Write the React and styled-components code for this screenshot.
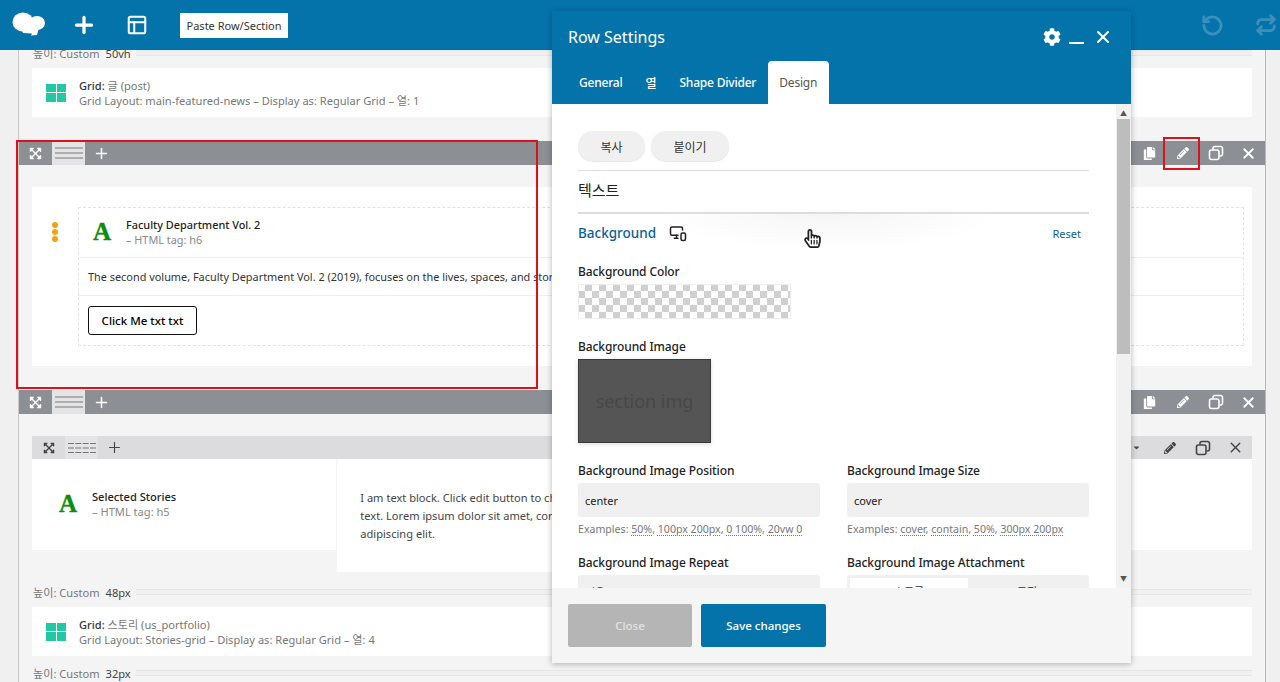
import React from "react";
import styled, { createGlobalStyle } from "styled-components";
import { Plus, PanelsTopLeft, RotateCcw, Repeat, X, MonitorSmartphone } from "lucide-react";
import {
  FaExpandArrowsAlt,
  FaPencilAlt,
  FaCopy,
  FaCog,
  FaCaretDown,
  FaRegHandPointer,
} from "react-icons/fa";

const GlobalStyle = createGlobalStyle`
  html, body {
    margin: 0;
    padding: 0;
    height: 100%;
    overflow: hidden;
    background: #f0f0f1;
    font-family: "Noto Sans", "Noto Sans CJK KR", sans-serif;
    font-size: 11.1px;
    color: #333;
  }
  * { box-sizing: border-box; }
`;

const Page = styled.div`
  position: relative;
  width: 1280px;
  height: 682px;
  overflow: hidden;
`;

const TopBar = styled.header`
  position: absolute;
  top: 0;
  left: 0;
  right: 0;
  height: 50px;
  z-index: 5;
  background: #0473aa;
  color: #fff;
  display: flex;
  align-items: center;
  padding: 0 0 0 12px;
`;

const BarIcon = styled.span`
  display: flex;
  align-items: center;
  justify-content: center;
  width: ${(p) => p.$w}px;
  color: ${(p) => (p.$dim ? "#3a90bd" : "#fff")};
`;

const PasteButton = styled.button`
  width: 108px;
  height: 25px;
  margin-left: 28px;
  margin-right: auto;
  border: 0;
  background: #fff;
  color: #333;
  font: inherit;
  font-size: 11px;
  padding: 0;
`;

const HistoryGroup = styled.div`
  display: flex;
  gap: 26px;
`;

const Canvas = styled.main`
  width: 1248px;
  height: 682px;
  margin-left: 18px;
  padding-top: 45px;
  background: #f4f4f4;
  border-left: 1px solid #c8c8c8;
  border-right: 1px solid #b8b8b8;
  overflow: hidden;
`;

const RowHead = styled.div`
  display: flex;
  justify-content: space-between;
  height: ${(p) => (p.$inner ? 23 : 24)}px;
  background: ${(p) => (p.$inner ? "#dcdcde" : "#8c8f94")};
  color: ${(p) => (p.$inner ? "#444" : "#fff")};
`;

const HeadGroup = styled.div`
  display: flex;
`;

const HeadButton = styled.span`
  display: flex;
  align-items: center;
  justify-content: center;
  width: 33px;
  height: 100%;
  background: ${(p) => (p.$active ? "#e4e4e6" : "transparent")};
`;

const Inset = styled.div`
  padding: ${(p) => p.$pad || "0 13px"};
`;

const Spacer = styled.div`
  display: flex;
  align-items: center;
  gap: 5px;
  height: 16px;
  margin-top: ${(p) => p.$top || 0}px;
  padding-left: 1px;
  color: #777;
  white-space: nowrap;
  b {
    font-weight: 400;
    color: #444;
    margin-left: 6px;
  }
`;

const SpacerLine = styled.i`
  flex: 1;
  height: 6px;
  background: #f0f0f0;
  border-top: 1px solid #e6e6e6;
  border-bottom: 1px solid #e6e6e6;
`;

const GridCard = styled.div`
  display: flex;
  align-items: center;
  gap: 13px;
  height: 49px;
  margin-top: 7px;
  padding-left: 14px;
  background: #fff;
  color: #777;
  line-height: 15px;
  b {
    color: #333;
    font-weight: 500;
  }
`;

const GridText = styled.div`
  padding-top: 1px;
`;

const GridIcon = styled.span`
  display: grid;
  grid-template-columns: 1fr 1fr;
  gap: 1px;
  width: 20px;
  height: 18px;
  i {
    background: #20c9a4;
  }
`;

const Row = styled.section`
  margin-top: ${(p) => p.$top}px;
`;

const WhiteBox = styled.div`
  display: flex;
  align-items: flex-start;
  gap: 20px;
  margin-top: 22px;
  padding: 20px 8px 20px 20px;
  background: #fff;
`;

const Dots = styled.span`
  display: flex;
  flex-direction: column;
  gap: 1px;
  margin-top: 15px;
  i {
    width: 6px;
    height: 6px;
    border-radius: 50%;
    background: #f5a014;
  }
`;

const ElementCard = styled.div`
  flex: 1;
  min-width: 0;
  border: 1px dashed #e2e2e2;
  font-size: 10.9px;
`;

const CardRow = styled.div`
  display: flex;
  align-items: center;
  height: ${(p) => p.$h}px;
  padding: 0 0 ${(p) => p.$bottom || 0}px ${(p) => p.$left}px;
  border-bottom: ${(p) => (p.$line ? "1px solid #eee" : "0")};
  white-space: nowrap;
  overflow: hidden;
`;

const LetterIcon = styled.span`
  width: 33px;
  flex: none;
  font-family: "Liberation Serif", serif;
  font-weight: 700;
  font-size: 25px;
  line-height: 28px;
  color: #0b8e0b;
  -webkit-text-stroke: 0.4px #0b8e0b;
`;

const HeadingText = styled.div`
  line-height: 15px;
  color: #888;
  b {
    display: block;
    font-weight: 500;
    color: #222;
  }
`;

const OutlineButton = styled.span`
  display: flex;
  align-items: center;
  justify-content: center;
  width: 109px;
  height: 29px;
  border: 1px solid #111;
  border-radius: 3px;
  font-size: 11.5px;
  font-weight: 500;
  color: #000;
`;

const Columns = styled.div`
  display: grid;
  grid-template-columns: repeat(4, 1fr);
  gap: 1px;
  align-items: start;
`;

const Column = styled.div`
  background: #fff;
  min-height: ${(p) => p.$h}px;
  display: flex;
  align-items: center;
  padding: ${(p) => p.$pad};
  line-height: 18px;
`;

const ColumnText = styled.p`
  margin: 0;
  color: #444;
`;

const Modal = styled.aside`
  position: absolute;
  left: 552px;
  top: 11px;
  width: 579px;
  height: 652px;
  z-index: 6;
  display: flex;
  flex-direction: column;
  background: #fff;
  box-shadow: 0 1px 6px rgba(0, 0, 0, 0.3);
  font-size: 12px;
`;

const ModalHead = styled.div`
  background: #0473aa;
  color: #fff;
`;

const TitleRow = styled.div`
  display: flex;
  align-items: center;
  height: 50px;
  padding: 2px 18px 0 16px;
  font-size: 16px;
  svg {
    flex: none;
  }
`;

const Title = styled.span`
  margin-right: auto;
`;

const Minimize = styled.i`
  width: 15px;
  height: 2px;
  margin: 12px 9px 0 8px;
  background: #fff;
`;

const Tabs = styled.div`
  display: flex;
  height: 43px;
  padding-left: 15.5px;
`;

const Tab = styled.span`
  display: flex;
  align-items: center;
  padding: 0 11.5px;
  border-radius: 4px 4px 0 0;
  background: ${(p) => (p.$active ? "#fff" : "transparent")};
  color: ${(p) => (p.$active ? "#555" : "#fff")};
  font-weight: ${(p) => (p.$active ? 400 : 500)};
  letter-spacing: -0.2px;
`;

const ModalMain = styled.div`
  flex: 1;
  min-height: 0;
  display: flex;
`;

const ModalContent = styled.div`
  flex: 1;
  min-width: 0;
  overflow: hidden;
  padding: 27px 27px 0 26px;
`;

const Scrollbar = styled.div`
  flex: none;
  width: 15px;
  padding: 2px 0;
  background: #f1f1f1;
  display: flex;
  flex-direction: column;
  align-items: center;
  justify-content: space-between;
  color: #555;
  font-size: 7px;
  line-height: 15px;
  position: relative;
`;

const Thumb = styled.i`
  position: absolute;
  top: 15px;
  left: 1px;
  width: 13px;
  height: 235px;
  background: #bdbdbd;
`;

const PillRow = styled.div`
  display: flex;
  gap: 6px;
  padding-bottom: 9px;
  border-bottom: 1px solid #ddd;
`;

const Pill = styled.span`
  display: flex;
  align-items: center;
  justify-content: center;
  width: ${(p) => p.$w}px;
  height: 30px;
  padding-top: 1px;
  border-radius: 15px;
  background: #f0f0f0;
  box-shadow: 0 1px 1px rgba(0, 0, 0, 0.1);
  color: #333;
`;

const SubTitle = styled.div`
  display: flex;
  align-items: center;
  height: 43px;
  padding-bottom: 4px;
  border-bottom: 2px solid #ddd;
  font-size: 15px;
  color: #222;
`;

const SectionHead = styled.div`
  display: flex;
  align-items: center;
  height: 48px;
  padding: 0 8px 10px 0;
  background: radial-gradient(ellipse 170px 36px at 250px 0, rgba(0, 0, 0, 0.04), transparent);
  span:first-child {
    font-size: 13.5px;
    font-weight: 500;
    color: #0a5f95;
    margin-right: 13px;
  }
  svg {
    color: #222;
    margin-right: auto;
  }
  a {
    font-size: 11px;
    color: #0a5f95;
  }
`;

const Label = styled.div`
  height: 18px;
  line-height: 20px;
  margin-bottom: 4px;
  font-weight: 500;
  color: #222;
  letter-spacing: -0.1px;
`;

const Swatch = styled.div`
  width: 213px;
  height: 35px;
  margin-bottom: 18px;
  background-color: #fff;
  background-image: conic-gradient(#d0d0d0 25%, #fff 0 50%, #d0d0d0 0 75%, #fff 0);
  background-size: 14px 14px;
  box-shadow: inset 0 0 0 1px #eee;
`;

const ImagePreview = styled.div`
  width: 133px;
  height: 84px;
  margin-bottom: 18px;
  display: flex;
  align-items: center;
  justify-content: center;
  background: #555;
  border: 1px solid #3a3a3a;
  box-shadow: 0 1px 4px rgba(0, 0, 0, 0.15);
  color: #474747;
  font-size: 18px;
`;

const TwoCols = styled.div`
  display: grid;
  grid-template-columns: 242px 242px;
  column-gap: 27px;
`;

const Input = styled.div`
  height: 34px;
  padding: 0 7px;
  display: flex;
  align-items: center;
  border-radius: 3px;
  background: #f0f0f0;
  color: #222;
  font-size: 11px;
`;

const Hint = styled.div`
  height: 16px;
  line-height: 16px;
  margin: 4px 0 16px;
  color: #777;
  font-size: 10.6px;
  white-space: nowrap;
  u {
    text-decoration: underline dotted #777;
    text-underline-offset: 2px;
  }
`;

const Toggle = styled.div`
  display: grid;
  grid-template-columns: 1fr 1fr;
  height: 34px;
  padding: 3px;
  border-radius: 3px;
  background: #f0f0f0;
  text-align: center;
  line-height: 28px;
  font-size: 11px;
`;

const ToggleOption = styled.span`
  background: ${(p) => (p.$on ? "#fff" : "transparent")};
`;

const ModalFoot = styled.div`
  flex: none;
  display: flex;
  gap: 9px;
  height: 75px;
  padding: 16px;
  background: #f5f5f5;
`;

const FootButton = styled.span`
  display: flex;
  align-items: center;
  justify-content: center;
  width: ${(p) => p.$w}px;
  height: 43px;
  border-radius: 2px;
  background: ${(p) => (p.$primary ? "#0473aa" : "#b5b5b5")};
  color: ${(p) => (p.$primary ? "#fff" : "#e2e2e2")};
  font-size: 11.5px;
  font-weight: 500;
`;

const RedBox = styled.div`
  position: absolute;
  left: ${(p) => p.$x}px;
  top: ${(p) => p.$y}px;
  width: ${(p) => p.$w}px;
  height: ${(p) => p.$h}px;
  border: 2px solid #e0101a;
  z-index: 4;
  pointer-events: none;
`;

const HandCursor = styled.span`
  position: absolute;
  left: 803px;
  top: 229px;
  z-index: 7;
  display: flex;
  color: #222;
`;

const Logo = () => (
  <svg width="34" height="26" viewBox="0 0 34 26" fill="#fff">
    <ellipse cx="11" cy="10" rx="10.5" ry="9.5" />
    <ellipse cx="25" cy="11" rx="8" ry="7" />
    <path d="M9 16h18l-2 7-6 .5 1-2-9-.5z" />
  </svg>
);

const LinesIcon = ({ color }) => (
  <svg width="28" height="14" viewBox="0 0 28 14" stroke={color} strokeWidth="1.2">
    <path d="M0 2h28M0 7h28M0 12h28" />
  </svg>
);

const ColumnsIcon = () => (
  <svg width="28" height="12" viewBox="0 0 28 12" stroke="#777" strokeWidth="1">
    <path d="M0 1.500h6M7.300 1.500h6M14.700 1.500h6M22 1.500h6M0 6h6M7.300 6h6M14.700 6h6M22 6h6M0 10.500h6M7.300 10.500h6M14.700 10.500h6M22 10.500h6" />
  </svg>
);

const CloneIcon = () => (
  <svg width="16" height="16" viewBox="0 0 16 16" fill="none" stroke="currentColor" strokeWidth="1.6">
    <rect x="1.500" y="5" width="9.500" height="9.500" rx="2" />
    <path d="M5 4.500V3.500a2 2 0 0 1 2-2h5.500a2 2 0 0 1 2 2V9a2 2 0 0 1-2 2h-1" />
  </svg>
);

const RowActions = ({ copy, caret }) => (
  <HeadGroup>
    {copy && <HeadButton><FaCopy size={13} /></HeadButton>}
    {caret && <HeadButton><FaCaretDown size={9} /></HeadButton>}
    <HeadButton><FaPencilAlt size={12} /></HeadButton>
    <HeadButton><CloneIcon /></HeadButton>
    <HeadButton><X size={17} strokeWidth={copy ? 2.6 : 2} /></HeadButton>
  </HeadGroup>
);

const RowLeft = () => (
  <HeadGroup>
    <HeadButton><FaExpandArrowsAlt size={13} /></HeadButton>
    <HeadButton $active><LinesIcon color="#777" /></HeadButton>
    <HeadButton><Plus size={17} strokeWidth={2.2} /></HeadButton>
  </HeadGroup>
);

const HeightSpacer = ({ value, top }) => (
  <Spacer $top={top}>
    <span>높이: Custom<b>{value}</b></span>
    <SpacerLine />
  </Spacer>
);

const GridBlock = ({ name, layout, cols }) => (
  <GridCard>
    <GridIcon><i /><i /><i /><i /></GridIcon>
    <GridText>
      <div><b>Grid:</b> {name}</div>
      <div>Grid Layout: {layout} – Display as: Regular Grid – 열: {cols}</div>
    </GridText>
  </GridCard>
);

export default function App() {
  return (
    <Page>
      <GlobalStyle />
      <TopBar>
        <Logo />
        <BarIcon $w={76}><Plus size={26} strokeWidth={3} /></BarIcon>
        <BarIcon $w={30}><PanelsTopLeft size={22} strokeWidth={2.2} /></BarIcon>
        <PasteButton>Paste Row/Section</PasteButton>
        <HistoryGroup>
          <BarIcon $w={28} $dim><RotateCcw size={23} strokeWidth={3} /></BarIcon>
          <BarIcon $w={28} $dim><Repeat size={22} strokeWidth={3} /></BarIcon>
        </HistoryGroup>
      </TopBar>

      <Canvas>
        <Inset>
          <HeightSpacer value="50vh" />
          <GridBlock name="글 (post)" layout="main-featured-news" cols={1} />
        </Inset>

        <Row $top={24}>
          <RowHead>
            <RowLeft />
            <RowActions copy />
          </RowHead>
          <Inset>
            <WhiteBox>
              <Dots><i /><i /><i /></Dots>
              <ElementCard>
                <CardRow $h={50} $left={14} $bottom={2} $line>
                  <LetterIcon>A</LetterIcon>
                  <HeadingText>
                    <b>Faculty Department Vol. 2</b>
                    – HTML tag: h6
                  </HeadingText>
                </CardRow>
                <CardRow $h={38} $left={9} $line>
                  The second volume, Faculty Department Vol. 2 (2019), focuses on the lives, spaces, and stories of its faculty.
                </CardRow>
                <CardRow $h={49} $left={9}>
                  <OutlineButton>Click Me txt txt</OutlineButton>
                </CardRow>
              </ElementCard>
            </WhiteBox>
          </Inset>
        </Row>

        <Row $top={24}>
          <RowHead>
            <RowLeft />
            <RowActions copy />
          </RowHead>
          <Inset $pad="22px 13px 0">
            <RowHead $inner>
              <HeadGroup>
                <HeadButton><FaExpandArrowsAlt size={12} /></HeadButton>
                <HeadButton $active><ColumnsIcon /></HeadButton>
                <HeadButton><Plus size={17} strokeWidth={1.6} /></HeadButton>
              </HeadGroup>
              <RowActions caret />
            </RowHead>
            <Columns>
              <Column $h={91} $pad="0 0 2px 27px">
                <LetterIcon>A</LetterIcon>
                <HeadingText>
                  <b>Selected Stories</b>
                  – HTML tag: h5
                </HeadingText>
              </Column>
              <Column $h={113} $pad="0 20px 0 23px">
                <ColumnText>
                  I am text block. Click edit button to change this text. Lorem ipsum dolor sit amet, consectetur adipiscing elit.
                </ColumnText>
              </Column>
              <Column $h={91} $pad="0" />
              <Column $h={91} $pad="0" />
            </Columns>
            <HeightSpacer value="48px" top={12} />
            <GridBlock name="스토리 (us_portfolio)" layout="Stories-grid" cols={4} />
            <HeightSpacer value="32px" top={9} />
          </Inset>
        </Row>
      </Canvas>

      <RedBox $x={16} $y={140} $w={522} $h={249} />
      <RedBox $x={1163} $y={137} $w={37} $h={33} />

      <Modal>
        <ModalHead>
          <TitleRow>
            <Title>Row Settings</Title>
            <FaCog size={18} />
            <Minimize />
            <X size={20} strokeWidth={2.4} />
          </TitleRow>
          <Tabs>
            <Tab>General</Tab>
            <Tab>열</Tab>
            <Tab>Shape Divider</Tab>
            <Tab $active>Design</Tab>
          </Tabs>
        </ModalHead>
        <ModalMain>
          <ModalContent>
            <PillRow>
              <Pill $w={67}>복사</Pill>
              <Pill $w={78}>붙이기</Pill>
            </PillRow>
            <SubTitle>텍스트</SubTitle>
            <SectionHead>
              <span>Background</span>
              <MonitorSmartphone size={18} />
              <a>Reset</a>
            </SectionHead>
            <Label>Background Color</Label>
            <Swatch />
            <Label>Background Image</Label>
            <ImagePreview>section img</ImagePreview>
            <TwoCols>
              <div>
                <Label>Background Image Position</Label>
                <Input>center</Input>
                <Hint>Examples: <u>50%</u>, <u>100px 200px</u>, <u>0 100%</u>, <u>20vw 0</u></Hint>
              </div>
              <div>
                <Label>Background Image Size</Label>
                <Input>cover</Input>
                <Hint>Examples: <u>cover</u>, <u>contain</u>, <u>50%</u>, <u>300px 200px</u></Hint>
              </div>
              <div>
                <Label>Background Image Repeat</Label>
                <Input>없음</Input>
              </div>
              <div>
                <Label>Background Image Attachment</Label>
                <Toggle>
                  <ToggleOption $on>스크롤</ToggleOption>
                  <ToggleOption>고정</ToggleOption>
                </Toggle>
              </div>
            </TwoCols>
          </ModalContent>
          <Scrollbar>
            <span>▲</span>
            <Thumb />
            <span>▼</span>
          </Scrollbar>
        </ModalMain>
        <ModalFoot>
          <FootButton $w={124}>Close</FootButton>
          <FootButton $w={125} $primary>Save changes</FootButton>
        </ModalFoot>
      </Modal>

      <HandCursor><FaRegHandPointer size={19} /></HandCursor>
    </Page>
  );
}
